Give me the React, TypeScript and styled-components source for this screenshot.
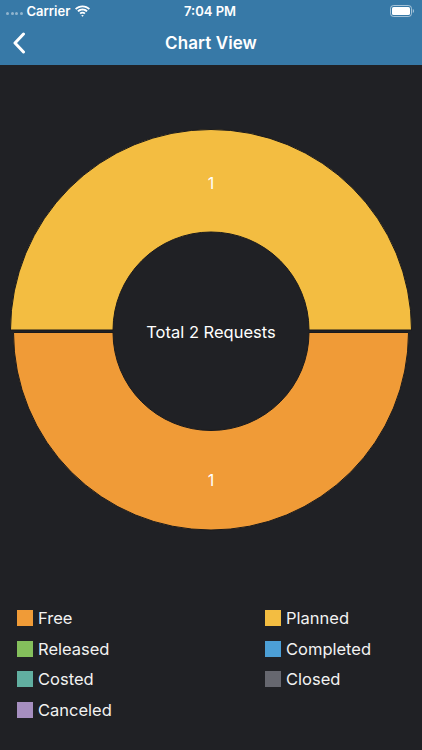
import * as React from 'react'
import styled, { createGlobalStyle } from 'styled-components'

const GlobalStyle = createGlobalStyle`
  html, body {
    margin: 0;
    padding: 0;
    background: #202125;
  }
  * { box-sizing: border-box; }
`

const Screen = styled.div`
  width: 422px;
  height: 750px;
  background: #202125;
  font-family: Inter, "Noto Sans", sans-serif;
  color: #ffffff;
  overflow: hidden;
`

const Header = styled.div`
  background: #3779a7;
`

const StatusBar = styled.div`
  height: 21px;
  display: grid;
  grid-template-columns: 1fr auto 1fr;
  align-items: center;
  padding: 0 8px 0 6px;
  font-size: 13px;
  font-weight: 600;
`

const StatusLeft = styled.div`
  display: flex;
  align-items: center;
  gap: 4px;
`

const Dots = styled.span`
  display: flex;
  gap: 1.5px;
  margin-top: 6px;
  span {
    width: 3px;
    height: 3px;
    border-radius: 50%;
    background: rgba(255, 255, 255, 0.45);
  }
`

const StatusRight = styled.div`
  display: flex;
  justify-content: flex-end;
`

const NavBar = styled.div`
  height: 44px;
  position: relative;
  display: flex;
  align-items: center;
  justify-content: center;
`

const BackButton = styled.div`
  position: absolute;
  left: 12px;
  top: 11px;
  display: flex;
`

const Title = styled.div`
  font-size: 17px;
  font-weight: 600;
  letter-spacing: 0.1px;
`

const ChartArea = styled.div`
  display: flex;
  justify-content: center;
  margin-top: 56px;
`

const Legend = styled.div`
  display: grid;
  grid-template-columns: 248px 1fr;
  padding: 62px 0 0 17px;
`

const LegendItem = styled.div`
  height: 30.5px;
  display: flex;
  align-items: center;
  gap: 5px;
  font-size: 16.5px;
  color: #f2f2f2;
`

const Swatch = styled.span<{ $color: string }>`
  width: 16px;
  height: 16px;
  background: ${p => p.$color};
  flex-shrink: 0;
`

const legend = [
  { label: 'Free', color: '#f09b37' },
  { label: 'Planned', color: '#f3bd41' },
  { label: 'Released', color: '#84bf5c' },
  { label: 'Completed', color: '#4c9fd6' },
  { label: 'Costed', color: '#61afa1' },
  { label: 'Closed', color: '#66676f' },
  { label: 'Canceled', color: '#a68fc0' },
]

const halfRing = (cx: number, cy: number, ro: number, ri: number, top: boolean) => {
  const s = top ? 0 : 1
  return `M ${cx - ro} ${cy} A ${ro} ${ro} 0 0 ${top ? 1 : 0} ${cx + ro} ${cy} L ${cx + ri} ${cy} A ${ri} ${ri} 0 0 ${s} ${cx - ri} ${cy} Z`
}

const Donut = () => (
  <svg width="422" height="420" viewBox="0 0 422 420">
    <path d={halfRing(211, 209, 200.5, 98, true)} fill="#f3bd41" stroke="#1a1a1c" strokeWidth="1" />
    <path d={halfRing(211, 211.5, 197.5, 98, false)} fill="#f09b37" stroke="#1a1a1c" strokeWidth="1" />
    <text x="211" y="64" fill="#fff" fontSize="16" textAnchor="middle" dominantBaseline="middle" fontFamily="Inter, sans-serif">1</text>
    <text x="211" y="361" fill="#fff" fontSize="16" textAnchor="middle" dominantBaseline="middle" fontFamily="Inter, sans-serif">1</text>
    <text x="211" y="212" fill="#fff" fontSize="16.5" textAnchor="middle" dominantBaseline="middle" fontFamily="Inter, sans-serif">Total 2 Requests</text>
  </svg>
)

export default function App() {
  return (
    <Screen>
      <GlobalStyle />
      <Header>
        <StatusBar>
          <StatusLeft>
            <Dots><span /><span /><span /><span /></Dots>
            <span>Carrier</span>
            <svg width="17" height="12" viewBox="0 0 17 12">
              <path d="M8.5 2.2c2.4 0 4.6.9 6.2 2.5l1.3-1.3C14 1.4 11.4.4 8.5.4S3 1.4 1 3.4l1.3 1.3C3.9 3.1 6.1 2.2 8.5 2.2z" fill="#fff" />
              <path d="M8.5 5.4c1.5 0 2.9.6 3.9 1.6l1.3-1.3C12.4 4.4 10.5 3.6 8.5 3.6s-3.9.8-5.2 2.1L4.6 7c1-1 2.4-1.6 3.9-1.6z" fill="#fff" />
              <path d="M8.5 8.6c.7 0 1.3.3 1.7.7l1.3-1.3c-.8-.8-1.9-1.2-3-1.2s-2.2.4-3 1.2l1.3 1.3c.4-.4 1-.7 1.7-.7zM8.5 11.8l1.3-1.3c-.3-.3-.8-.5-1.3-.5s-1 .2-1.3.5z" fill="#fff" />
            </svg>
          </StatusLeft>
          <span>7:04 PM</span>
          <StatusRight>
            <svg width="24" height="12" viewBox="0 0 24 12">
              <rect x="0.5" y="0.5" width="21" height="11" rx="3" fill="none" stroke="rgba(255,255,255,0.55)" />
              <rect x="2" y="2" width="18" height="8" rx="1.6" fill="#fff" />
              <path d="M22.8 4v4c.7-.2 1.2-1 1.2-2s-.5-1.8-1.2-2z" fill="rgba(255,255,255,0.55)" />
            </svg>
          </StatusRight>
        </StatusBar>
        <NavBar>
          <BackButton>
            <svg width="14" height="22" viewBox="0 0 14 22">
              <path d="M11.5 2 L3 11 L11.5 20" fill="none" stroke="#fff" strokeWidth="3" strokeLinecap="round" strokeLinejoin="round" />
            </svg>
          </BackButton>
          <Title>Chart View</Title>
        </NavBar>
      </Header>
      <ChartArea>
        <Donut />
      </ChartArea>
      <Legend>
        {legend.map(item => (
          <LegendItem key={item.label}>
            <Swatch $color={item.color} />
            {item.label}
          </LegendItem>
        ))}
      </Legend>
    </Screen>
  )
}
